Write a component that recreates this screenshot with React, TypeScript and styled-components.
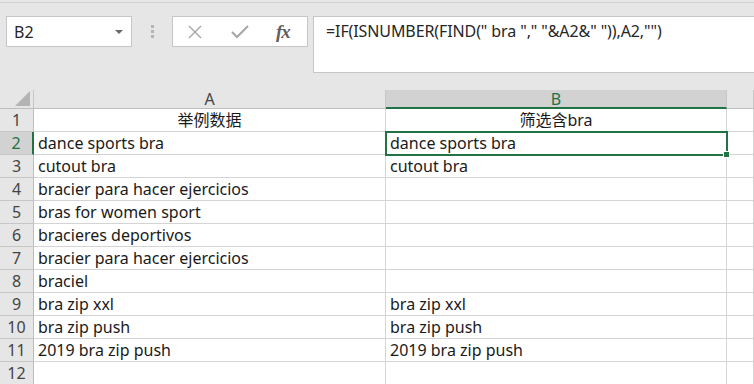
import styled, { createGlobalStyle } from 'styled-components';

const GlobalStyle = createGlobalStyle`
  html, body {
    margin: 0;
    padding: 0;
    background: #e6e6e6;
  }
  body {
    font-family: 'Noto Sans', 'Noto Sans CJK SC', sans-serif;
    overflow: hidden;
  }
`;

const Page = styled.div`
  width: 754px;
  height: 384px;
  overflow: hidden;
  background: #e6e6e6;
`;

const Toolbar = styled.div`
  height: 86px;
  box-sizing: border-box;
  border-top: 1px solid #d2d2d2;
  margin: 2px 0 2px;
  padding: 13px 0 0 6px;
  display: flex;
  align-items: flex-start;
`;

const NameBox = styled.div`
  width: 126px;
  height: 31px;
  box-sizing: border-box;
  background: #fff;
  border: 1px solid #c6c6c6;
  display: flex;
  align-items: center;
  justify-content: space-between;
  padding: 0 8px 0 7px;
  font-size: 16px;
  color: #262626;
`;

const DropArrow = styled.span`
  width: 0;
  height: 0;
  border-left: 4px solid transparent;
  border-right: 4px solid transparent;
  border-top: 4px solid #6a6a6a;
  margin-top: 1px;
`;

const Grip = styled.div`
  width: 40px;
  height: 31px;
  display: flex;
  flex-direction: column;
  align-items: center;
  justify-content: center;
  gap: 2px;
  & > span {
    width: 3px;
    height: 3px;
    background: #b4b4b4;
  }
`;

const ButtonBox = styled.div`
  width: 136px;
  height: 31px;
  box-sizing: border-box;
  background: #fff;
  border: 1px solid #c6c6c6;
  display: flex;
  align-items: center;
  padding: 0 0 0 12px;
  gap: 25px;
`;

const IconSlot = styled.span`
  width: 20px;
  height: 20px;
  display: flex;
  align-items: center;
  justify-content: center;
`;

const Fx = styled.span`
  font-family: 'Liberation Serif', serif;
  font-style: italic;
  font-weight: bold;
  font-size: 19px;
  color: #5f5f5f;
  letter-spacing: -1px;
  margin-left: 1px;
`;

const FormulaBox = styled.div`
  flex: 1;
  height: 57px;
  margin-left: 5px;
  box-sizing: border-box;
  background: #fff;
  border: 1px solid #c6c6c6;
  border-right: none;
  padding: 3px 0 0 12px;
  font-size: 16px;
  letter-spacing: -0.1px;
  color: #262626;
  white-space: pre;
`;

const Sheet = styled.div`
  display: grid;
  grid-template-columns: 34px 352px 341px 1fr;
  grid-auto-rows: 23px;
  grid-template-rows: 19px;
  background: #fff;
`;

const HeadCell = styled.div<{ $active?: boolean }>`
  box-sizing: border-box;
  background: ${({ $active }) => ($active ? '#d2d2d2' : '#e6e6e6')};
  border-right: 1px solid #c6c6c6;
  border-bottom: ${({ $active }) => ($active ? '2px solid #217346' : '1px solid #bdbdbd')};
  color: ${({ $active }) => ($active ? '#217346' : '#444')};
  font-size: 16px;
  line-height: 18px;
  text-align: center;
`;

const Corner = styled.div`
  box-sizing: border-box;
  background: #e6e6e6;
  border-right: 1px solid #c6c6c6;
  border-bottom: 1px solid #bdbdbd;
  display: flex;
  align-items: flex-end;
  justify-content: flex-end;
  padding: 0 3px 2px 0;
`;

const RowHead = styled.div<{ $active?: boolean }>`
  box-sizing: border-box;
  background: ${({ $active }) => ($active ? '#d2d2d2' : '#e6e6e6')};
  border-right: ${({ $active }) => ($active ? '2px solid #217346' : '1px solid #bdbdbd')};
  border-bottom: 1px solid #c6c6c6;
  color: ${({ $active }) => ($active ? '#217346' : '#444')};
  font-size: 16px;
  line-height: 23px;
  text-align: center;
`;

const Cell = styled.div<{ $center?: boolean; $selected?: boolean }>`
  position: relative;
  box-sizing: border-box;
  border-right: 1px solid #d4d4d4;
  border-bottom: 1px solid #d4d4d4;
  padding: 0 4px;
  font-size: 16px;
  line-height: 23px;
  color: #1a1a1a;
  white-space: nowrap;
  text-align: ${({ $center }) => ($center ? 'center' : 'left')};
  ${({ $selected }) =>
    $selected &&
    `
    outline: 2px solid #217346;
    outline-offset: -1px;
    z-index: 1;
    &::after {
      content: '';
      position: absolute;
      right: -4px;
      bottom: -4px;
      width: 5px;
      height: 5px;
      background: #217346;
      border: 1px solid #fff;
    }
  `}
`;

const rows: [string, string][] = [
  ['举例数据', '筛选含bra'],
  ['dance sports bra', 'dance sports bra'],
  ['cutout bra', 'cutout bra'],
  ['bracier para hacer ejercicios', ''],
  ['bras for women sport', ''],
  ['bracieres deportivos', ''],
  ['bracier para hacer ejercicios', ''],
  ['braciel', ''],
  ['bra zip xxl', 'bra zip xxl'],
  ['bra zip push', 'bra zip push'],
  ['2019 bra zip push', '2019 bra zip push'],
  ['', ''],
];

export default function App() {
  return (
    <Page>
      <GlobalStyle />
      <Toolbar>
        <NameBox>
          B2
          <DropArrow />
        </NameBox>
        <Grip>
          <span />
          <span />
          <span />
        </Grip>
        <ButtonBox>
          <IconSlot>
            <svg width="16" height="16" viewBox="0 0 16 16">
              <path d="M2 2 L14 14 M14 2 L2 14" stroke="#a6a6a6" strokeWidth="1.4" fill="none" />
            </svg>
          </IconSlot>
          <IconSlot>
            <svg width="18" height="14" viewBox="0 0 18 14">
              <path d="M1 7 L6 12 L17 1" stroke="#a6a6a6" strokeWidth="2" fill="none" />
            </svg>
          </IconSlot>
          <Fx>fx</Fx>
        </ButtonBox>
        <FormulaBox>{'=IF(ISNUMBER(FIND(" bra "," "&A2&" ")),A2,"")'}</FormulaBox>
      </Toolbar>
      <Sheet>
        <Corner>
          <svg width="15" height="15" viewBox="0 0 15 15">
            <polygon points="15,0 15,15 0,15" fill="#b4b4b4" />
          </svg>
        </Corner>
        <HeadCell>A</HeadCell>
        <HeadCell $active>B</HeadCell>
        <HeadCell />
        {rows.map(([a, b], i) => (
          <Row key={i} n={i + 1} a={a} b={b} />
        ))}
      </Sheet>
    </Page>
  );
}

function Row({ n, a, b }: { n: number; a: string; b: string }) {
  return (
    <>
      <RowHead $active={n === 2}>{n}</RowHead>
      <Cell $center={n === 1}>{a}</Cell>
      <Cell $center={n === 1} $selected={n === 2}>
        {b}
      </Cell>
      <Cell />
    </>
  );
}
